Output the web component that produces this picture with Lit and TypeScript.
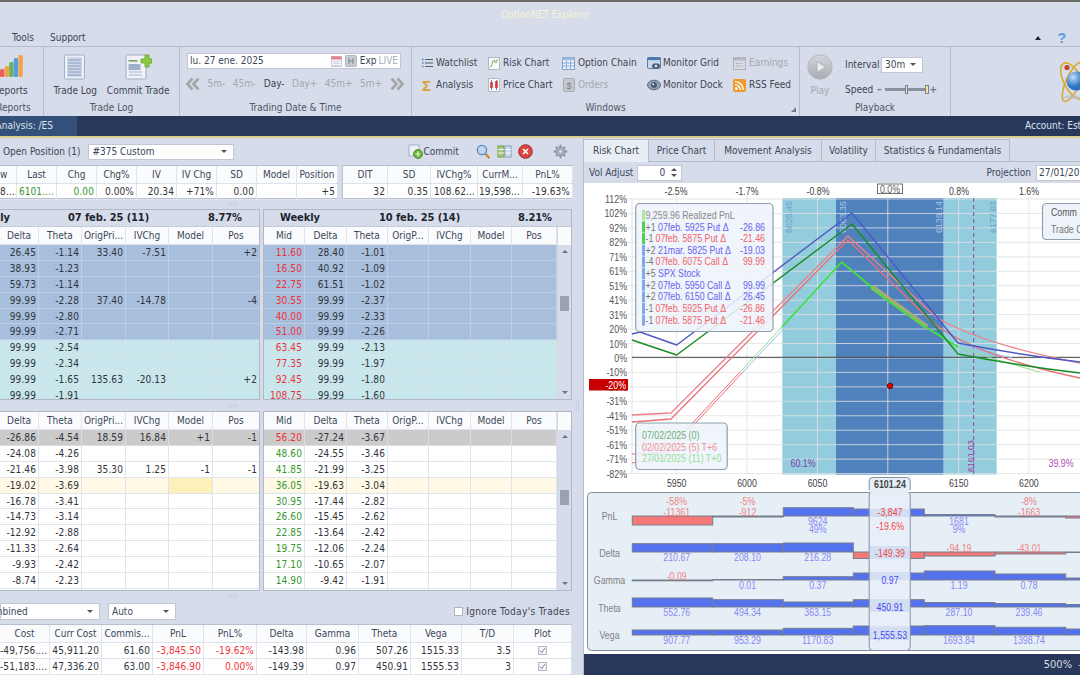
import { LitElement, html, css, svg } from "lit";
import { customElement } from "lit/decorators.js";

type Cell = string | { t: string; c?: string };
type Row = { cells: Cell[]; cls?: string };

// column widths measured off the reference
const POS_L = [17, 40, 40, 40, 40, 40, 40, 40, 41];
const POS_R = [45, 43, 47, 45, 50];
const CHAIN_L = [39, 43, 44, 43, 44, 47];
const CHAIN_R = [41, 42, 41, 41, 42, 41, 45];
const TOTALS = [50, 52, 51, 51, 53, 50, 52, 52, 51, 52, 58];

const rows = (list: string[][], cls: (i: number) => string = () => ""): Row[] =>
  list.map((cells, i) => ({ cells: [...cells, ...Array(Math.max(0, 6 - cells.length)).fill("")], cls: cls(i) }));

const upperLeft = rows(
  [
    ["26.45", "-1.14", "33.40", "-7.51", "", "+2"],
    ["38.93", "-1.23"],
    ["59.73", "-1.14"],
    ["99.99", "-2.28", "37.40", "-14.78", "", "-4"],
    ["99.99", "-2.80"],
    ["99.99", "-2.71"],
    ["99.99", "-2.54"],
    ["99.99", "-2.34"],
    ["99.99", "-1.65", "135.63", "-20.13", "", "+2"],
    ["99.99", "-1.91"],
  ],
  (i) => (i < 6 ? "itm" : "otm")
);

const upperRight: Row[] = [
  ["11.60", "28.40", "-1.01"],
  ["16.50", "40.92", "-1.09"],
  ["22.75", "61.51", "-1.02"],
  ["30.55", "99.99", "-2.37"],
  ["40.00", "99.99", "-2.33"],
  ["51.00", "99.99", "-2.26"],
  ["63.45", "99.99", "-2.13"],
  ["77.35", "99.99", "-1.97"],
  ["92.45", "99.99", "-1.80"],
  ["108.75", "99.99", "-1.60"],
].map((r, i) => ({
  cells: [{ t: r[0], c: "red" }, r[1], r[2], "", "", "", ""],
  cls: i < 6 ? "itm" : "otm",
}));

const lowerLeft: Row[] = [
  ...rows(
    [
      ["-26.86", "-4.54", "18.59", "16.84", "+1", "-1"],
      ["-24.08", "-4.26"],
      ["-21.46", "-3.98", "35.30", "1.25", "-1", "-1"],
    ],
    (i) => (i === 0 ? "sel" : "")
  ),
  { cells: ["-19.02", "-3.69", "", "", { t: "", c: "model" }, ""], cls: "atm" },
  ...rows([
    ["-16.78", "-3.41"],
    ["-14.73", "-3.14"],
    ["-12.92", "-2.88"],
    ["-11.33", "-2.64"],
    ["-9.93", "-2.42"],
    ["-8.74", "-2.23"],
    [""],
  ]),
];

const lowerRight: Row[] = [
  ["56.20", "-27.24", "-3.67"],
  ["48.60", "-24.55", "-3.46"],
  ["41.85", "-21.99", "-3.25"],
  ["36.05", "-19.63", "-3.04"],
  ["30.95", "-17.44", "-2.82"],
  ["26.60", "-15.45", "-2.62"],
  ["22.85", "-13.64", "-2.42"],
  ["19.75", "-12.06", "-2.24"],
  ["17.10", "-10.65", "-2.07"],
  ["14.90", "-9.42", "-1.91"],
  ["", "", ""],
].map((r, i) => ({
  cells: [{ t: r[0], c: i === 0 ? "red" : "green" }, r[1], r[2], "", "", "", ""],
  cls: i === 0 ? "sel" : i === 3 ? "atm" : "",
}));

const HEAD_L = ["Delta", "Theta", "OrigPri...", "IVChg", "Model", "Pos"];
const HEAD_R = ["Mid", "Delta", "Theta", "OrigP...", "IVChg", "Model", "Pos"];

// ---------- small icons ----------
const I = {
  reports: html`<svg width="26" height="26" viewBox="0 0 26 26"><rect x="2" y="15" width="4.4" height="8" rx="1.5" fill="#e8605a"/><rect x="6.6" y="12" width="4.4" height="11" rx="1.5" fill="#f2a04c"/><rect x="11.2" y="8" width="4.4" height="15" rx="1.5" fill="#62b65c"/><rect x="15.8" y="4" width="4.4" height="19" rx="1.5" fill="#5a9ae0"/><rect x="20.4" y="1" width="4.4" height="22" rx="1.5" fill="#f0a648"/></svg>`,
  tradeLog: html`<svg width="24" height="26" viewBox="0 0 24 26"><rect x="1.5" y="1" width="20" height="24" rx="1" fill="#eef2f8" stroke="#9fb0c8"/><rect x="4" y="3" width="15" height="20" fill="#cdd7e8"/><path d="M5 6h13M5 9h13M5 12h13M5 15h13M5 18h13M5 21h13" stroke="#8c9cc0"/></svg>`,
  commitTrade: html`<svg width="28" height="26" viewBox="0 0 28 26"><rect x="2" y="1" width="20" height="24" rx="1" fill="#eef2f8" stroke="#9fb0c8"/><rect x="4.5" y="6" width="9" height="1.6" fill="#7f9a6a"/><rect x="4.5" y="10" width="12" height="6" fill="#9fb0c8"/><path d="M5 18h13M5 21h13" stroke="#a8b6cc"/><path d="M17 5h4V1h4v4h3v4h-3v4h-4V9h-4z" fill="#8ccc3e" stroke="#5f9a22" stroke-width=".7"/></svg>`,
  cal: html`<svg width="11" height="11" viewBox="0 0 11 11"><rect x=".5" y=".5" width="10" height="10" fill="#f6f6fa" stroke="#c9c9d8"/><rect x=".5" y=".5" width="10" height="3" fill="#e87f80"/><path d="M2 5.5h7M2 7.5h7M2 9.5h7" stroke="#cfd4e2"/></svg>`,
  snap: html`<svg width="12" height="12" viewBox="0 0 12 12"><rect x=".5" y=".5" width="11" height="11" rx="1" fill="#c8ccd4" stroke="#b0b5c0"/><path d="M4 3v6M8 3v6M4 6h4" stroke="#7c808a"/></svg>`,
  back: html`<svg width="14" height="14" viewBox="0 0 14 14" fill="none" stroke="#a4a8a8" stroke-width="2.8"><path d="M6.5 1.5L1.5 7l5 5.5M12.5 1.5L7.5 7l5 5.5"/></svg>`,
  fwd: html`<svg width="14" height="14" viewBox="0 0 14 14" fill="none" stroke="#a4a8a8" stroke-width="2.8"><path d="M1.5 1.5L6.5 7l-5 5.5M7.5 1.5l5 5.5-5 5.5"/></svg>`,
  watch: html`<svg width="12" height="12" viewBox="0 0 12 12"><path d="M4 2.5h8M4 6h8M4 9.5h8" stroke="#505c70" stroke-width="1.2"/><path d="M1 2.5h1.6M1 6h1.6M1 9.5h1.6" stroke="#4a86cc" stroke-width="1.6"/></svg>`,
  risk: html`<svg width="12" height="13" viewBox="0 0 12 13"><rect x=".5" y=".5" width="11" height="12" fill="#fafbfd" stroke="#b0b8c8"/><path d="M2 10c2.4 0 2.2-7 4-7 1.2 0 .8 3 1.6 3 .8 0 1-3.6 2.4-3.6" fill="none" stroke="#7a9a48"/></svg>`,
  chain: html`<svg width="13" height="13" viewBox="0 0 13 13"><rect x=".5" y=".5" width="12" height="12" fill="#e6eefa" stroke="#7ea0cc"/><rect x=".5" y=".5" width="12" height="2.5" fill="#9dbbe0"/><path d="M4.5 3v9.5M8.5 3v9.5M1 6h11M1 9h11" stroke="#8fb0d8"/></svg>`,
  grid: html`<svg width="14" height="13" viewBox="0 0 14 13"><rect x=".5" y=".5" width="13" height="11" rx="1" fill="#c8d8ec" stroke="#5d7ea8"/><rect x=".5" y=".5" width="13" height="2.6" fill="#4d78ac"/><ellipse cx="9" cy="9" rx="4" ry="2.8" fill="#4e5f78"/><circle cx="9" cy="9" r="1.2" fill="#e8eef6"/></svg>`,
  earn: html`<svg width="13" height="13" viewBox="0 0 13 13"><rect x=".5" y=".5" width="12" height="12" fill="#d8dae0" stroke="#aeb2ba"/><rect x=".5" y=".5" width="12" height="3" fill="#b4b8c0"/><path d="M3 6.5h7M3 9h7" stroke="#a0a4ac" stroke-dasharray="1.4 1"/></svg>`,
  price: html`<svg width="12" height="14" viewBox="0 0 12 14"><rect x=".5" y=".5" width="11" height="13" fill="#fafbfd" stroke="#b0b8c8"/><path d="M3.5 2v10M8.5 2v10" stroke="#70809a"/><rect x="2.2" y="4" width="2.6" height="6" fill="#d43c3c"/><rect x="7.2" y="3" width="2.6" height="7" fill="#d43c3c"/></svg>`,
  orders: html`<svg width="12" height="14" viewBox="0 0 12 14"><rect x=".5" y=".5" width="11" height="13" rx="1" fill="#c4c8ce" stroke="#a6aab2"/><text x="6" y="10.5" text-anchor="middle" font-size="9" font-family="Liberation Sans" fill="#7c8088">$</text></svg>`,
  dock: html`<svg width="14" height="12" viewBox="0 0 14 12"><ellipse cx="7" cy="6" rx="6.5" ry="4.8" fill="#8fa2b8" stroke="#5d6c82"/><circle cx="7" cy="6" r="3" fill="#4a5a72"/><circle cx="6.2" cy="5.2" r="1" fill="#e8eef6"/></svg>`,
  rss: html`<svg width="13" height="13" viewBox="0 0 13 13"><rect width="13" height="13" rx="2" fill="#f29a2e"/><circle cx="3.4" cy="9.6" r="1.4" fill="#fff"/><path d="M2 5.6a5.4 5.4 0 0 1 5.4 5.4M2 2.6A8.4 8.4 0 0 1 10.4 11" fill="none" stroke="#fff" stroke-width="1.4"/></svg>`,
  play: html`<svg width="26" height="26" viewBox="0 0 26 26"><defs><linearGradient id="pl" x1="0" y1="0" x2="0" y2="1"><stop offset="0" stop-color="#d4d6da"/><stop offset="1" stop-color="#a8abb2"/></linearGradient></defs><circle cx="13" cy="13" r="12.2" fill="url(#pl)" stroke="#b4b8c0"/><path d="M10 7.5l8.5 5.5-8.5 5.5z" fill="#e8eaee" stroke="#9a9da4" stroke-width=".6"/></svg>`,
  atom: html`<svg width="24" height="44" viewBox="0 0 24 44"><g fill="none" stroke="#d8a820" stroke-width="1.5"><ellipse cx="17" cy="21" rx="9" ry="20" transform="rotate(-28 17 21)"/><ellipse cx="17" cy="22" rx="7" ry="21" transform="rotate(24 17 22)"/></g><defs><radialGradient id="at" cx=".35" cy=".3"><stop offset="0" stop-color="#bfe0fa"/><stop offset="1" stop-color="#2f74c4"/></radialGradient></defs><circle cx="20" cy="21" r="9.5" fill="url(#at)"/><circle cx="11" cy="7.5" r="2.6" fill="#c4442a"/><ellipse cx="16" cy="37" rx="8" ry="2" fill="#b8bcc8" opacity=".6"/></svg>`,
  commit: html`<svg width="15" height="15" viewBox="0 0 15 15"><rect x="1" y="1" width="10" height="11" fill="#eef2f8" stroke="#9fb0c8"/><circle cx="10" cy="10" r="4.4" fill="#6cb83c" stroke="#4a8c24"/><path d="M10 7.6v4.8M7.6 10h4.8" stroke="#e8f6d8" stroke-width="1.2"/></svg>`,
  search: html`<svg width="15" height="16" viewBox="0 0 15 16"><circle cx="6" cy="6" r="4.6" fill="#bcd8f4" stroke="#5c88bc" stroke-width="1.3"/><path d="M9.5 9.8l4 4.6" stroke="#c8843c" stroke-width="2.2"/></svg>`,
  cols: html`<svg width="15" height="15" viewBox="0 0 15 15"><rect x="1" y="2" width="6" height="11" fill="#a8cc78" stroke="#72984a"/><rect x="8" y="2" width="6" height="11" fill="#cfdcee" stroke="#8ca2c0"/><path d="M1 5.5h6M1 9h6M8 5.5h6M8 9h6" stroke="#f0f4f8"/></svg>`,
  close: html`<svg width="15" height="15" viewBox="0 0 15 15"><circle cx="7.5" cy="7.5" r="6.8" fill="#dc4444" stroke="#a82828"/><path d="M5 5l5 5M10 5l-5 5" stroke="#fff" stroke-width="1.6"/></svg>`,
  gear: html`<svg width="15" height="15" viewBox="0 0 15 15"><circle cx="7.5" cy="7.5" r="4.6" fill="#aab2bf" stroke="#7e8796"/><circle cx="7.5" cy="7.5" r="1.9" fill="#dfe4ec" stroke="#7e8796" stroke-width=".6"/><path d="M7.5.8v2M7.5 12.2v2M.8 7.5h2M12.2 7.5h2M2.8 2.8l1.4 1.4M10.8 10.8l1.4 1.4M2.8 12.2l1.4-1.4M10.8 4.2l1.4-1.4" stroke="#8a93a2" stroke-width="1.8"/></svg>`,
  check: html`<svg width="9" height="9" viewBox="0 0 9 9"><rect x=".5" y=".5" width="8" height="8" fill="#f4f6fa" stroke="#b0b6c2"/><path d="M2 4.6l1.8 2L7 2" fill="none" stroke="#7f8794" stroke-width="1"/></svg>`,
};

// chart text in the reference is narrow, so squeeze it horizontally
const T = (x: number, y: number, s: string, fill: string, anchor = "start", size = 10.5, weight = "400") =>
  svg`<text transform="translate(${x} ${y}) scale(.84 1)" text-anchor=${anchor} fill=${fill} font-size=${size} font-weight=${weight}>${s}</text>`;
const V = (x: number, y: number, s: string, fill: string) =>
  svg`<text transform="translate(${x} ${y}) rotate(-90) scale(.84 .92)" fill=${fill} font-size="10.5">${s}</text>`;

// ---------- chart ----------
const TICKS = ["112%", "102%", "92%", "82%", "71%", "61%", "51%", "41%", "31%", "20%", "10%", "0%", "-10%", "-20%", "-31%", "-41%", "-51%", "-61%", "-71%", "-82%"];
const tickY = (i: number) => 199 + i * 14.45;
const GRID_X = [676.7, 747, 817.5, 887.8, 958.7, 1028.9];
const TOP_PCT: [number, string][] = [[676, "-2.5%"], [747, "-1.7%"], [818, "-0.8%"], [959, "0.8%"], [1029, "1.6%"]];
const BOTTOM: [number, string][] = [[676.7, "5950"], [747, "6000"], [817.5, "6050"], [958.7, "6150"], [1028.9, "6200"]];
const LEG: [string, string, string, string, string][] = [
  ["#50d050", "+1", "07feb. 5925 Put Δ", "-26.86", "b"],
  ["#50d050", "-1", "07feb. 5875 Put Δ", "-21.46", "r"],
  ["#80a8ec", "+2", "21mar. 5825 Put Δ", "-19.03", "b"],
  ["#80a8ec", "-4", "07feb. 6075 Call Δ", "99.99", "r"],
  ["#80a8ec", "+5", "SPX Stock", "", "b"],
  ["#80a8ec", "+2", "07feb. 5950 Call Δ", "99.99", "b"],
  ["#80a8ec", "+2", "07feb. 6150 Call Δ", "26.45", "b"],
  ["#80a8ec", "-1", "07feb. 5925 Put Δ", "-26.86", "r"],
  ["#80a8ec", "-1", "07feb. 5875 Put Δ", "-21.46", "r"],
];

function riskChart() {
  return html`<svg class="chart" viewBox="584 183 496 307" width="496" height="307" font-family="Liberation Sans" font-size="11">
    <rect x="584" y="183" width="496" height="307" fill="#fff"/>
    <rect x="782.3" y="198" width="214.4" height="276.5" fill="#93cddd"/>
    <rect x="836" y="198" width="107.3" height="276.5" fill="#4f81bd"/>
    ${TICKS.map((_, i) => svg`<line x1="628" x2="1080" y1=${tickY(i)} y2=${tickY(i)} stroke="#e2e2e2" opacity=".8"/>`)}
    <line x1="632" x2="632" y1="198" y2="474.5" stroke="#e2e2e2"/>
    ${GRID_X.map((x) => svg`<line x1=${x} x2=${x} y1="196" y2="474.5" stroke="#e2e2e2" opacity=".8"/>`)}
    <line x1="632" x2="1080" y1="357.3" y2="357.3" stroke="#444"/>
    <line x1="973.7" x2="973.7" y1="198" y2="474" stroke="#8e44a0" stroke-dasharray="4 3"/>
    ${V(792, 233, "6025.45", "#6aa0cf")}
    ${V(846, 233, "6063.35", "#a8c8e8")}
    ${V(942, 233, "6139.14", "#a8c8e8")}
    ${V(996, 233, "6177.03", "#6aa0cf")}
    ${V(974, 472, "6161.03", "#a040a8")}
    ${T(803, 467, "60.1%", "#8040a8", "middle")}
    ${T(1061, 467, "39.9%", "#b050b8", "middle")}
    <g fill="none" stroke-linejoin="round">
      <path d="M872 287L927 327" stroke="#a8a878" stroke-width="5"/>
      <path d="M632 454L665 452.7L740 372" stroke="#f06a74"/>
      <path d="M632 463L663 458L743 372" stroke="#f06a74"/>
      <path d="M740 372L782 327" stroke="#90e090"/>
      <path d="M743 372L790 322" stroke="#98bcf0"/>
      <path d="M782 327L841.7 262L887 300L927 328L958 347" stroke="#40e040" stroke-width="1.8"/>
      <path d="M958 347Q995 360 1040 372" stroke="#90e090"/>
      <path d="M958 343Q985 352 1012 358" stroke="#98bcf0"/>
      <path d="M632 415L671 413L848 236L937 318Q985 345 1080 363" stroke="#f08088" stroke-width="1.3"/>
      <path d="M632 422L671 419L848 240L932 322Q975 356 1080 378" stroke="#e87078" stroke-width="1.3"/>
      <path d="M632 334L640 332L676.7 345L852 213L958 343Q1020 355 1080 362" stroke="#5058c8" stroke-width="1.4"/>
      <path d="M632 340L676.7 355L852 224L958 354Q1020 366 1080 373" stroke="#1a8c24" stroke-width="1.4"/>
    </g>
    ${TICKS.map((t, i) => T(627, tickY(i) + 4, t, "#555", "end"))}
    ${TOP_PCT.map(([x, t]) => T(x, 195, t, "#444", "middle"))}
    <rect x="877.5" y="184" width="25" height="9.5" fill="#fff" stroke="#707070"/>
    ${T(890, 193, "0.0%", "#606060", "middle")}
    <rect x="589" y="379" width="39" height="11.5" fill="#c80000"/>
    ${T(626, 389, "-20%", "#fff", "end")}
    <circle cx="890" cy="386" r="2.8" fill="#e80000" stroke="#300" stroke-width=".7"/>
    ${BOTTOM.map(([x, t]) => T(x, 487, t, "#444", "middle"))}
    <path d="M869.2 491V481a3.5 3.5 0 0 1 3.5-3.5h34a3.5 3.5 0 0 1 3.5 3.5v10" fill="#e6eef6" stroke="#8090a0"/>
    ${T(890, 488, "6101.24", "#444", "middle", 10.5, "700")}

    <rect x="635.7" y="203.5" width="137.3" height="128" rx="4" fill="#eef3fa" fill-opacity=".88" stroke="#8e9eae" stroke-width="1.2"/>
    <rect x="642" y="210" width="3" height="10.5" fill="#a8e8a0"/>
    ${T(645.5, 219, "9,259.96 Realized PnL", "#888")}
    ${LEG.map(([bar, q, name, val, tone], i) => {
      const y = 230.5 + i * 11.65;
      const col = tone === "b" ? "#6464f0" : "#f06468";
      return svg`<rect x="642" y=${y - 9} width="3" height="11" fill=${bar}/>
        ${T(645.5, y, q, "#777")}
        ${T(tone === "b" ? 658 : 655.5, y, name, col)}
        ${T(765, y, val, col, "end")}`;
    })}

    <rect x="635.7" y="423" width="91.5" height="46.5" rx="4" fill="#eef3fa" fill-opacity=".88" stroke="#8e9eae" stroke-width="1.2"/>
    ${T(642, 439, "07/02/2025 (0)", "#6cb078")}
    ${T(642, 450.5, "02/02/2025 (5) T+6", "#f09098")}
    ${T(642, 462, "27/01/2025 (11) T+0", "#90e098")}

    <rect x="1042.5" y="203.5" width="60" height="36" rx="4" fill="#eef3fa" stroke="#8e9eae" stroke-width="1.2"/>
    ${T(1051, 216, "Comm", "#555")}
    ${T(1051, 233, "Trade C", "#777")}
  </svg>`;
}

// ---------- bars ----------
const EDGES = [632.3, 712.7, 783.3, 853.3, 924.3, 995, 1065.7, 1082];
const CENTERS = [676.7, 747.5, 817.7, 888, 959, 1029];
const BLUE = "#5472ee";
const REDB = "#f57878";
const LANES = [
  { name: "PnL", base: 516, y: 516, tops: [525, 517, 507.7, 509, 514.5, 517, 518] },
  { name: "Delta", base: 552, y: 553, tops: [543.7, 543.7, 543, 558.5, 556, 554, 552.5] },
  { name: "Gamma", base: 580, y: 580.5, tops: [580.8, 579.5, 576.7, 573, 571, 574, 578] },
  { name: "Theta", base: 607, y: 608, tops: [598, 599.7, 602, 599.7, 602.5, 603.5, 604.5] },
  { name: "Vega", base: 635, y: 635.5, tops: [630, 630, 628.3, 626, 625.7, 627.3, 629] },
];
// [column, text, centre y, red?]
const LABELS: [number, string, number, boolean][] = [
  [0, "-58%", 501.7, true], [0, "-11361", 512, true],
  [1, "-5%", 501.7, true], [1, "-912", 512, true],
  [2, "9624", 521, false], [2, "49%", 529.5, false],
  [4, "1681", 521, false], [4, "9%", 529.5, false],
  [5, "-8%", 501.7, true], [5, "-1663", 512, true],
  [0, "210.67", 557.7, false], [1, "208.10", 557.7, false], [2, "216.28", 557.7, false],
  [4, "-94.19", 548, true], [5, "-43.01", 548, true],
  [0, "-0.09", 576, true], [1, "0.01", 585, false], [2, "0.37", 585, false], [4, "1.19", 585, false], [5, "0.78", 585, false],
  [0, "552.76", 612.7, false], [1, "494.34", 612.7, false], [2, "363.15", 612.7, false], [4, "287.10", 612.7, false], [5, "239.46", 612.7, false],
  [0, "907.77", 640, false], [1, "953.29", 640, false], [2, "1170.83", 640, false], [4, "1693.84", 640, false], [5, "1398.74", 640, false],
];
const FOCUS: [string, number, string, number, number][] = [
  ["-3,847", 512, "#f04848", 509, 8],
  ["-19.6%", 526, "#f04848", 0, 0],
  ["-149.39", 553, "#f04848", 546, 13],
  ["0.97", 580, "#4848f0", 572, 8],
  ["450.91", 607, "#4848f0", 599, 13],
  ["1,555.53", 635, "#4848f0", 627, 13],
];

function barsChart() {
  return html`<svg class="bars" viewBox="584 490 496 164" width="496" height="164" font-family="Liberation Sans" font-size="10.5">
    <rect x="584" y="490" width="496" height="164" fill="#fff"/>
    <rect x="587.5" y="492.5" width="520" height="158" rx="4" fill="#e6eef6" stroke="#808e9e"/>
    ${LANES.map((l) => svg`
      ${T(609.5, l.y + 3.5, l.name, "#808080", "middle")}
      ${l.tops.map((t, i) => {
        const h = Math.abs(t - l.base);
        const up = t < l.base;
        return svg`<rect x=${EDGES[i]} y=${up ? t : l.base} width=${EDGES[i + 1] - EDGES[i]} height=${h} fill=${up ? BLUE : REDB} stroke="#767e8c"/>`;
      })}`)}
    ${LABELS.map(([c, t, y, red]) => T(CENTERS[c], y + 3.7, t, red ? "#f08484" : "#8888f4", "middle"))}
    <rect x="869.2" y="491" width="41" height="159.5" rx="4" fill="#e9eff8" fill-opacity=".92" stroke="#8090a0"/>
    <rect x="870" y="490" width="39.4" height="2.5" fill="#e6eef6"/>
    ${FOCUS.map(([t, y, c, by, bh]) => svg`
      ${bh ? svg`<rect x="870" y=${by} width="39.5" height=${bh} fill="#d4def2"/>` : ""}
      ${T(890, y + 3.7, t, c, "middle")}`)}
  </svg>`;
}

const cellOf = (c: Cell) => {
  const o = typeof c === "string" ? { t: c, c: "" } : c;
  return html`<div class="td ${o.c ?? ""}">${o.t}</div>`;
};

@customElement("app-root")
export class AppRoot extends LitElement {
  static styles = css`
    :host {
      display: block;
      width: 1080px;
      height: 675px;
      overflow: hidden;
      background: #d6dce9;
      color: #30343c;
      font: 10px/1.2 "DejaVu Sans", "Liberation Sans", sans-serif;
      font-stretch: condensed;
    }
    * { box-sizing: border-box; }
    svg { display: block; flex: none; }

    .strip { height: 2px; background: #6c6a66; }
    .title { height: 28px; text-align: center; padding: 7px 0 0 10px; color: #f7f5d8; }
    .menu { height: 16px; display: flex; align-items: center; padding-left: 12px; gap: 16px; color: #3c4658; }
    .menu .tri { margin-left: auto; width: 0; height: 0; border: 3px solid transparent; border-bottom: 4px solid #223; border-top: 0; }
    .menu .help { color: #5a9ae0; font: bold 14px "Liberation Sans"; margin-right: 14px; }

    .ribbon { height: 70px; display: flex; border-top: 1px solid #b4bdcd; overflow: hidden; color: #3c4658; }
    .group { display: flex; flex-direction: column; border-right: 1px solid #b4bdcd; flex: none; position: relative; }
    .group .body { flex: 1; min-height: 0; }
    .group .label { height: 17px; text-align: center; line-height: 17px; color: #4c5668; }
    .g-rep { width: 60px; margin-left: -16px; }
    .g-log { width: 136px; }
    .g-date { width: 232px; }
    .g-win { width: 388px; }
    .g-play { width: 151px; }
    .big { display: flex; flex-direction: column; align-items: center; gap: 5px; padding-top: 7px; }
    .g-rep .big { padding-right: 6px; }
    .g-log .body { display: flex; justify-content: center; gap: 10px; }
    .date { margin: 6px 0 0 7px; width: 214px; height: 16px; background: #fff; border: 1px solid #c0c8d6; display: flex; align-items: center; padding-left: 2px; }
    .date .txt { flex: 1; }
    .date svg { margin-right: 3px; }
    .date .exp { margin-right: 2px; }
    .date .live { color: #a8b0c0; margin-right: 2px; }
    .steps { margin: 7px 0 0 6px; display: flex; align-items: center; gap: 7.5px; color: #a2a8b4; height: 16px; }
    .steps .on { color: #38404e; }
    .windows { display: grid; grid-template-columns: 67px 75px 85px 86px auto; grid-auto-rows: 22px; padding: 5px 0 0 8px; }
    .wi { display: flex; align-items: center; gap: 3px; white-space: nowrap; }
    .wi .ic { width: 13px; display: flex; justify-content: center; flex: none; }
    .wi.off { color: #a2a8b4; }
    .sigma { color: #d8a030; font: bold 15px "Liberation Sans"; }
    .launch { position: absolute; right: 3px; bottom: 4px; width: 0; height: 0; border-left: 5px solid transparent; border-bottom: 5px solid #707a8c; }
    .play { display: flex; }
    .play .pbtn { width: 26px; margin: 7px 0 0 7px; display: flex; flex-direction: column; align-items: center; gap: 5px; color: #a2a8b4; }
    .play .ctl { margin-left: 12px; padding-top: 8px; display: grid; grid-template-columns: 36px auto; row-gap: 6px; align-items: center; }
    .slider { display: flex; align-items: center; width: 66px; height: 16px; gap: 3px; margin-left: -4px; }
    .slider .track { width: 42px; height: 3px; background: #8a92a0; position: relative; }
    .slider .track i { position: absolute; top: -3px; width: 4px; height: 9px; background: #d8dbe0; border: 1px solid #7a8290; }
    .slider .track i.end { background: #f4e4a0; right: -2px; }
    .slider .track i.mid { left: 20px; width: 3px; }
    .pm { color: #70788a; font-weight: bold; line-height: 1; }
    .logo { flex: 1; display: flex; justify-content: flex-end; padding-top: 13px; }

    .nav { height: 22px; background: #28385a; border-bottom: 2px solid #d8cc8c; display: flex; align-items: stretch; color: #dde2ec; overflow: hidden; }
    .nav .tab { width: 77px; background: #33507a; padding: 4px 24px 0 0; white-space: nowrap; display: flex; justify-content: flex-end; }
    .nav .acct { margin-left: auto; padding: 4px 0 0 0; width: 55px; white-space: nowrap; }

    .main { display: flex; height: 537px; }
    .left { width: 572px; flex: none; display: flex; flex-direction: column; }
    .vsplit { width: 11px; flex: none; display: flex; align-items: center; justify-content: center; }
    .vsplit i { width: 5px; height: 12px; background-image: radial-gradient(#a8b0c0 .6px, transparent .8px); background-size: 2.4px 2.4px; }
    .right { width: 497px; flex: none; display: flex; flex-direction: column; border-left: 1px solid #b4bdcd; }

    .tool { height: 27px; display: flex; align-items: center; padding-left: 3px; color: #3c4658; flex: none; }
    .select { background: #fff; border: 1px solid #c0c8d6; height: 16px; display: flex; align-items: center; padding: 0 6px 0 3px; justify-content: space-between; flex: none; }
    .select::after { content: ""; border: 3px solid transparent; border-top: 3px solid #555; border-bottom: 0; flex: none; }
    .tool .sel1 { width: 146px; margin-left: 8px; }
    .tool .cmt { margin-left: 174px; display: flex; align-items: center; gap: 0; width: 68px; }
    .tool .ti { margin-right: 6px; }
    .tool .gear { margin-left: 14px; }

    .postabs { display: flex; gap: 4px; height: 34px; flex: none; }
    .postabs .th:first-child { text-align: left; }
    .tbl { background: #fff; border: 1px solid #b8c0d0; border-width: 1px 1px 1px 0; }
    .tbl.full { border-width: 1px; }
    .postabs .full .th:first-child { text-align: center; }
    .hr, .tr { display: grid; }
    .hr { height: 18px; background: #fafbfd; border-bottom: 1px solid #dde2ec; }
    .th { text-align: center; line-height: 17px; border-right: 1px solid #e0e4ec; white-space: nowrap; overflow: hidden; color: #3c4658; }
    .tr { height: 15.9px; border-bottom: 1px solid #e0e4ec; }
    .tt { height: 16px; }
    .td { text-align: right; padding-right: 2px; line-height: 15px; border-right: 1px solid #e0e4ec; white-space: nowrap; overflow: hidden; letter-spacing: .1px; }
    .td.red { color: #ee3038; }
    .td.green { color: #36982c; }
    .td.model { background: #fdf0b8; }
    .tr.itm { background: #a7bfdd; border-color: #bccfe4; }
    .tr.itm .td { border-color: #bccfe4; }
    .tr.otm { background: #c8e7ed; border-color: #d5e4ea; }
    .tr.otm .td { border-color: #d5e4ea; }
    .tr.sel { background: #cbcbcb; border-color: #ddd; }
    .tr.sel .td { border-color: #ddd; }
    .tr.atm { background: #fff9e6; }

    .hs { height: 10px; flex: none; display: flex; padding-left: 227px; align-items: center; }
    .hs i { width: 12px; height: 5px; background-image: radial-gradient(#a8b0c0 .6px, transparent .8px); background-size: 2.4px 2.4px; }

    .chains { display: flex; gap: 3px; flex: none; overflow: hidden; }
    .c-up { height: 191px; }
    .c-lo { height: 180px; }
    .panel { border: 1px solid #b0b8c8; background: #fff; overflow: hidden; flex: none; display: flex; flex-direction: column; }
    .panel.cl { width: 260px; border-left: 0; }
    .panel.cr { width: 309px; }
    .ptitle { height: 17px; background: #d6dce9; display: flex; align-items: center; font-weight: bold; font-size: 11px; border-bottom: 1px solid #c4ccda; color: #202430; flex: none; letter-spacing: -.1px; }
    .ptitle b, .ptitle span { flex: none; }
    .cl .ptitle b { margin-left: -30px; width: 98px; }
    .cl .ptitle .dt { width: 140px; }
    .cr .ptitle b { margin-left: 16px; width: 99px; }
    .cr .ptitle .dt { width: 139px; }
    .pbody { display: flex; flex: 1; min-height: 0; overflow: hidden; }
    .pbody .grid { flex: 1; min-width: 0; }
    .sb { width: 14px; flex: none; background: #d6dce9; display: flex; flex-direction: column; align-items: center; border-left: 1px solid #d0d6e2; }
    .sb .cap { align-self: stretch; height: 18px; background: #fafbfd; margin-bottom: 5px; flex: none; }
    .sb .up { border: 3px solid transparent; border-bottom: 3px solid #6c7484; border-top: 0; flex: none; }
    .sb .thumb { width: 9px; height: 15px; background: #9aa2b2; flex: none; }
    .sb .dn { margin-top: auto; margin-bottom: 5px; border: 3px solid transparent; border-top: 3px solid #6c7484; border-bottom: 0; flex: none; }

    .filters { height: 23px; display: flex; align-items: center; flex: none; padding-bottom: 2px; color: #3c4658; }
    .filters .combo { width: 100px; margin-right: 8px; height: 17px; }
    .filters .auto { width: 68px; height: 17px; }
    .filters .ignore { margin-left: auto; margin-right: 2px; display: flex; align-items: center; gap: 3px; letter-spacing: .35px; }
    .filters .box { width: 9px; height: 9px; background: #fff; border: 1px solid #b0b6c2; }
    .totals { flex: 1; }
    .totals .tr { height: 16px; }
    .td.neg { color: #f0343c; }
    .td.plot { display: flex; justify-content: center; align-items: center; padding: 0; }

    .rtabs { height: 24px; display: flex; padding-top: 1px; flex: none; }
    .rtabs .t { height: 23px; border: 1px solid #b4bdcd; border-left: 0; display: flex; align-items: center; justify-content: center; color: #3c4658; }
    .rtabs .t.on { background: #e9edf4; border-bottom: 0; }
    .rtabs .gapfill { flex: 1; border-bottom: 1px solid #b4bdcd; }
    .volrow { height: 21px; display: flex; align-items: center; padding-left: 5px; color: #3c4658; flex: none; }
    .spin { width: 45px; height: 16px; margin-left: 4px; background: #fff; border: 1px solid #c0c8d6; display: flex; align-items: center; justify-content: flex-end; gap: 6px; padding-right: 4px; }
    .spin .ar { display: flex; flex-direction: column; gap: 3px; }
    .spin .ar i { display: block; border: 3px solid transparent; }
    .spin .ar i:first-child { border-bottom: 3px solid #555; border-top: 0; }
    .spin .ar i:last-child { border-top: 3px solid #555; border-bottom: 0; }
    .volrow .proj { margin-left: auto; }
    .pdate { width: 56px; height: 16px; margin: 0 -12px 0 5px; background: #fff; border: 1px solid #c0c8d6; padding-left: 2px; line-height: 14px; white-space: nowrap; overflow: hidden; flex: none; }
    .foot { flex: 1; background: #28385a; color: #d8dde8; display: flex; align-items: center; justify-content: flex-end; font-size: 11px; gap: 6px; }
    .foot span:last-child { margin-right: -3px; }
  `;

  private grid(cols: number[], head: string[], body: Row[]) {
    const tpl = cols.map((c) => c + "px").join(" ");
    return html`<div class="grid">
      <div class="hr" style="grid-template-columns:${tpl}">${head.map((h) => html`<div class="th">${h}</div>`)}</div>
      ${body.map((r) => html`<div class="tr ${r.cls ?? ""}" style="grid-template-columns:${tpl}">${r.cells.map(cellOf)}</div>`)}
    </div>`;
  }

  private chain(side: "cl" | "cr", cols: number[], head: string[], body: Row[], opts: { title?: [string, string, string]; thumb?: number }) {
    const withBar = side === "cr";
    return html`<div class="panel ${side}">
      ${opts.title ? html`<div class="ptitle"><b>${opts.title[0]}</b><span class="dt">${opts.title[1]}</span><span>${opts.title[2]}</span></div>` : ""}
      <div class="pbody">
        ${this.grid(cols, head, body)}
        ${withBar ? html`<div class="sb"><div class="cap"></div><div class="up"></div><div class="thumb" style="margin-top:${opts.thumb}px"></div><div class="dn"></div></div>` : ""}
      </div>
    </div>`;
  }

  render() {
    const posTpl = POS_L.map((c) => c + "px").join(" ");
    const posTpr = POS_R.map((c) => c + "px").join(" ");
    const totTpl = TOTALS.map((c) => c + "px").join(" ");
    const totals: Cell[][] = [
      ["-49,756....", "45,911.20", "61.60", { t: "-3,845.50", c: "neg" }, { t: "-19.62%", c: "neg" }, "-143.98", "0.96", "507.26", "1515.33", "3.5"],
      ["-51,183....", "47,336.20", "63.00", { t: "-3,846.90", c: "neg" }, { t: "0.00%", c: "neg" }, "-149.39", "0.97", "450.91", "1555.53", "3"],
    ];
    return html`
      <div class="strip"></div>
      <div class="title">OptionNET Explorer</div>
      <div class="menu"><span>Tools</span><span>Support</span><i class="tri"></i><span class="help">?</span></div>

      <div class="ribbon">
        <div class="group g-rep">
          <div class="body"><div class="big">${I.reports}<span>Reports</span></div></div>
          <div class="label">Reports</div>
        </div>
        <div class="group g-log">
          <div class="body">
            <div class="big">${I.tradeLog}<span>Trade Log</span></div>
            <div class="big">${I.commitTrade}<span>Commit Trade</span></div>
          </div>
          <div class="label">Trade Log</div>
        </div>
        <div class="group g-date">
          <div class="body">
            <div class="date"><span class="txt">lu. 27 ene. 2025</span>${I.cal}${I.snap}<span class="exp">Exp</span><span class="live">LIVE</span></div>
            <div class="steps">${I.back}<span>5m-</span><span>45m-</span><span class="on">Day-</span><span>Day+</span><span>45m+</span><span>5m+</span>${I.fwd}</div>
          </div>
          <div class="label">Trading Date &amp; Time</div>
        </div>
        <div class="group g-win">
          <div class="body windows">
            <div class="wi"><span class="ic">${I.watch}</span>Watchlist</div>
            <div class="wi"><span class="ic">${I.risk}</span>Risk Chart</div>
            <div class="wi"><span class="ic">${I.chain}</span>Option Chain</div>
            <div class="wi"><span class="ic">${I.grid}</span>Monitor Grid</div>
            <div class="wi off"><span class="ic">${I.earn}</span>Earnings</div>
            <div class="wi"><span class="ic sigma">Σ</span>Analysis</div>
            <div class="wi"><span class="ic">${I.price}</span>Price Chart</div>
            <div class="wi off"><span class="ic">${I.orders}</span>Orders</div>
            <div class="wi"><span class="ic">${I.dock}</span>Monitor Dock</div>
            <div class="wi"><span class="ic">${I.rss}</span>RSS Feed</div>
          </div>
          <div class="label">Windows</div>
          <i class="launch"></i>
        </div>
        <div class="group g-play">
          <div class="body play">
            <div class="pbtn">${I.play}<span>Play</span></div>
            <div class="ctl">
              <span>Interval</span><div class="select" style="width:42px">30m</div>
              <span>Speed</span>
              <div class="slider"><span class="pm">–</span><div class="track"><i class="mid"></i><i class="end"></i></div><span class="pm">+</span></div>
            </div>
          </div>
          <div class="label">Playback</div>
        </div>
        <div class="logo">${I.atom}</div>
      </div>

      <div class="nav"><div class="tab">Analysis: /ES</div><div class="acct">Account: Est</div></div>

      <div class="main">
        <div class="left">
          <div class="tool">
            <span>Open Position (1)</span>
            <div class="select sel1">#375 Custom</div>
            <div class="cmt">${I.commit}Commit</div>
            <span class="ti">${I.search}</span><span class="ti">${I.cols}</span><span class="ti">${I.close}</span>
            <span class="gear">${I.gear}</span>
          </div>
          <div class="postabs">
            <div class="tbl" style="width:338px">
              <div class="hr" style="grid-template-columns:${posTpl}">
                ${["w", "Last", "Chg", "Chg%", "IV", "IV Chg", "SD", "Model", "Position"].map((h) => html`<div class="th">${h}</div>`)}
              </div>
              <div class="tr tt" style="grid-template-columns:${posTpl}">
                ${cellOf("8....")}${cellOf({ t: "6101....", c: "green" })}${cellOf({ t: "0.00", c: "green" })}${["0.00%", "20.34", "+71%", "0.00", "", "+5"].map(cellOf)}
              </div>
            </div>
            <div class="tbl full" style="width:231px">
              <div class="hr" style="grid-template-columns:${posTpr}">
                ${["DIT", "SD", "IVChg%", "CurrM...", "PnL%"].map((h) => html`<div class="th">${h}</div>`)}
              </div>
              <div class="tr tt" style="grid-template-columns:${posTpr}">${["32", "0.35", "108.62...", "19,598...", "-19.63%"].map(cellOf)}</div>
            </div>
          </div>
          <div class="hs"><i></i></div>
          <div class="chains c-up">
            ${this.chain("cl", CHAIN_L, HEAD_L, upperLeft, { title: ["Weekly", "07 feb. 25 (11)", "8.77%"] })}
            ${this.chain("cr", CHAIN_R, HEAD_R, upperRight, { title: ["Weekly", "10 feb. 25 (14)", "8.21%"], thumb: 43 })}
          </div>
          <div class="hs" style="height:11px"><i></i></div>
          <div class="chains c-lo">
            ${this.chain("cl", CHAIN_L, HEAD_L, lowerLeft, {})}
            ${this.chain("cr", CHAIN_R, HEAD_R, lowerRight, { thumb: 52 })}
          </div>
          <div class="hs"><i></i></div>
          <div class="filters">
            <div class="select combo"><span style="margin-left:-22px">Combined</span></div>
            <div class="select auto">Auto</div>
            <div class="ignore"><i class="box"></i>Ignore Today's Trades</div>
          </div>
          <div class="tbl totals">
            <div class="hr" style="grid-template-columns:${totTpl}">
              ${["Cost", "Curr Cost", "Commis...", "PnL", "PnL%", "Delta", "Gamma", "Theta", "Vega", "T/D", "Plot"].map((h) => html`<div class="th">${h}</div>`)}
            </div>
            ${totals.map((r) => html`<div class="tr" style="grid-template-columns:${totTpl}">${r.map(cellOf)}<div class="td plot">${I.check}</div></div>`)}
          </div>
        </div>
        <div class="vsplit"><i></i></div>
        <div class="right">
          <div class="rtabs">
            <div class="t on" style="width:65px">Risk Chart</div>
            <div class="t" style="width:66px">Price Chart</div>
            <div class="t" style="width:107px">Movement Analysis</div>
            <div class="t" style="width:54px">Volatility</div>
            <div class="t" style="width:134px">Statistics &amp; Fundamentals</div>
            <div class="gapfill"></div>
          </div>
          <div class="volrow">
            <span>Vol Adjust</span>
            <div class="spin">0<span class="ar"><i></i><i></i></span></div>
            <span class="proj">Projection</span>
            <div class="pdate">27/01/2025</div>
          </div>
          ${riskChart()}
          ${barsChart()}
          <div class="foot"><span>500%</span><span>–</span></div>
        </div>
      </div>
    `;
  }
}
